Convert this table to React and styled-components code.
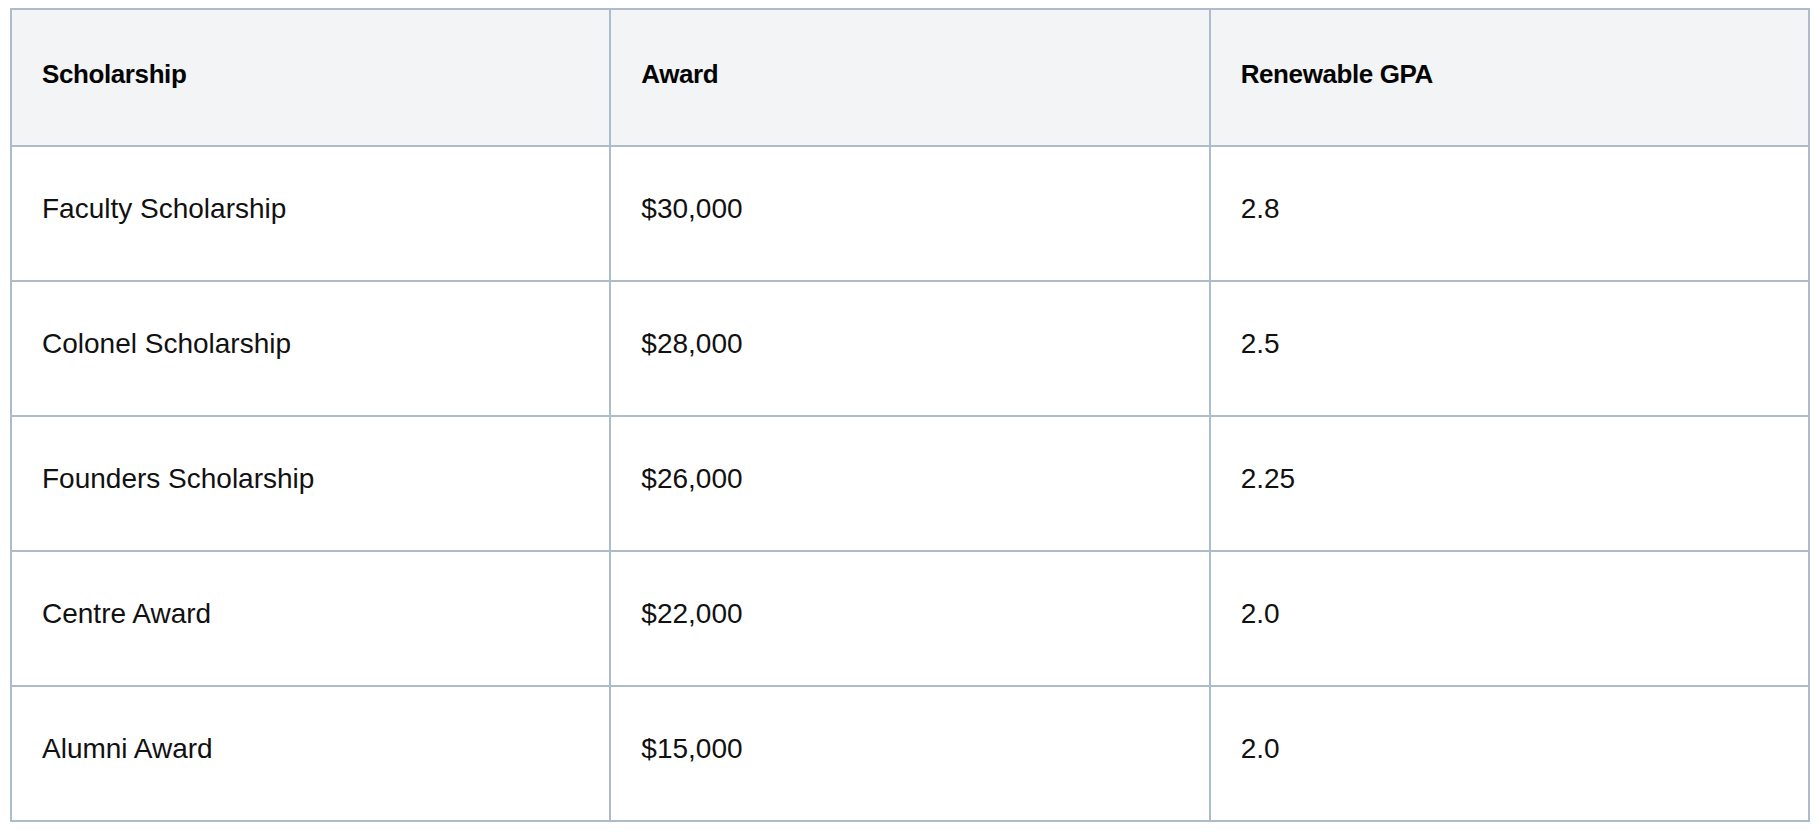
import styled, { createGlobalStyle } from 'styled-components';

const GlobalStyle = createGlobalStyle`
  body {
    margin: 0;
    background: #ffffff;
    font-family: 'Liberation Sans', Arial, sans-serif;
    color: #111111;
  }
`;

const rows = [
  ['Faculty Scholarship', '$30,000', '2.8'],
  ['Colonel Scholarship', '$28,000', '2.5'],
  ['Founders Scholarship', '$26,000', '2.25'],
  ['Centre Award', '$22,000', '2.0'],
  ['Alumni Award', '$15,000', '2.0'],
];

export default function App() {
  return (
    <>
      <GlobalStyle />
      <Page>
        <Table>
          <thead>
            <tr>
              <HeadCell>Scholarship</HeadCell>
              <HeadCell>Award</HeadCell>
              <HeadCell>Renewable GPA</HeadCell>
            </tr>
          </thead>
          <tbody>
            {rows.map((row) => (
              <tr key={row[0]}>
                {row.map((cell, i) => (
                  <Cell key={i}>{cell}</Cell>
                ))}
              </tr>
            ))}
          </tbody>
        </Table>
      </Page>
    </>
  );
}

const Page = styled.div`
  padding: 8px 8px 0 10px;
`;

const Table = styled.table`
  width: 1800px;
  table-layout: fixed;
  border-collapse: collapse;
  border: 2px solid #aebbcb;
`;

const HeadCell = styled.th`
  height: 129px;
  padding: 0 30px 6px 30px;
  text-align: left;
  vertical-align: middle;
  background: #f3f4f6;
  border: 2px solid #aebbcb;
  font-family: 'Liberation Sans', Arial, sans-serif;
  font-weight: 700;
  font-size: 26px;
  letter-spacing: -0.4px;
  color: #050505;
`;

const Cell = styled.td`
  height: 123px;
  padding: 0 30px 10px 30px;
  text-align: left;
  vertical-align: middle;
  background: #ffffff;
  border: 2px solid #aebbcb;
  font-size: 28px;
  font-weight: 400;
  color: #111111;
`;
